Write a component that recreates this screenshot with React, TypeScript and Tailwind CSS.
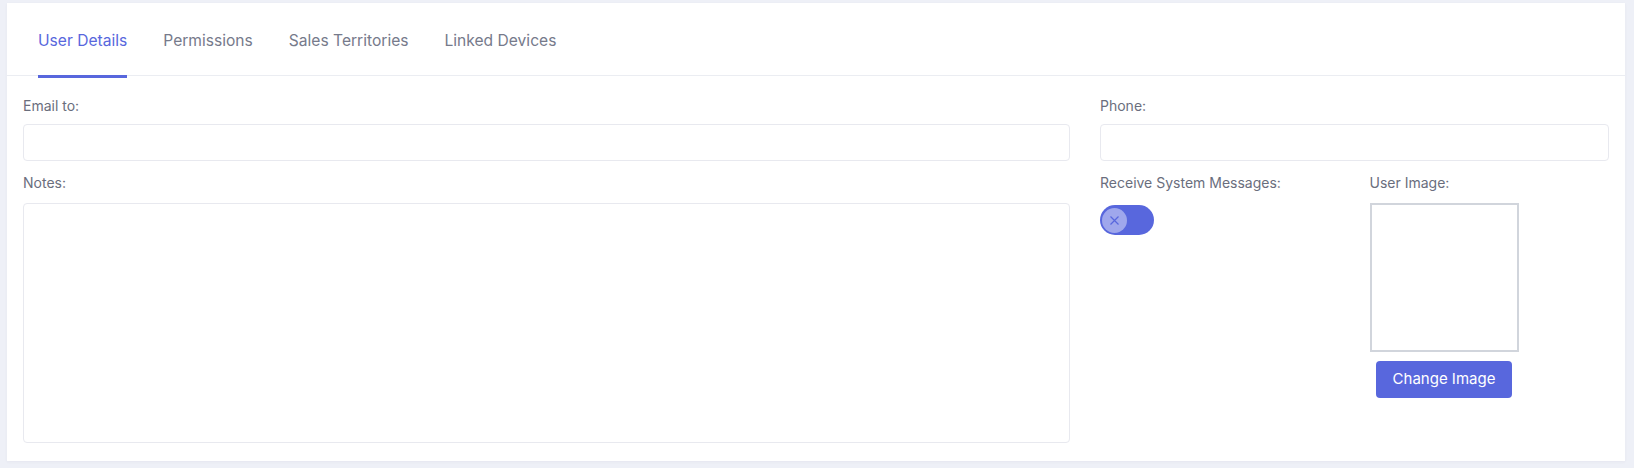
import React from 'react';

const tabs = ['User Details', 'Permissions', 'Sales Territories', 'Linked Devices'];

function Field({ label, children }: { label: string; children: React.ReactNode }) {
  return (
    <div className="flex flex-col">
      <label className="text-[14px] leading-[22px] text-[#6a6e7d] mb-[7px]">{label}</label>
      {children}
    </div>
  );
}

function Toggle() {
  return (
    <button type="button" className="relative w-[54px] h-[30px] rounded-full bg-[#5867dd]">
      <span className="absolute left-[2px] top-[2.5px] w-[25px] h-[25px] rounded-full bg-[#9fa7ec] flex items-center justify-center">
        <svg width="11" height="11" viewBox="0 0 11 11" fill="none" stroke="#5867dd" strokeWidth="1.2">
          <path d="M1.5 1.5l8 8M9.5 1.5l-8 8" />
        </svg>
      </span>
    </button>
  );
}

export default function App() {
  return (
    <div className="w-[1634px] h-[468px] bg-[#eef0f7] pl-[7px] pr-[9px] pt-[3px] pb-[7px]" style={{ fontFamily: 'Inter, "Noto Sans", sans-serif' }}>
      <div className="h-[458px] bg-white shadow-[0_1px_3px_rgba(82,63,105,0.05)]">
        <div className="h-[73px] border-b border-[#ebedf2] pl-[31px] flex gap-[36px]">
          {tabs.map((t, i) => (
            <div key={t} className="relative h-full pt-[25px]">
              <span className={`text-[15.6px] leading-[24px] ${i === 0 ? 'text-[#5867dd]' : 'text-[#767a8b]'}`}>{t}</span>
              {i === 0 && <span className="absolute left-0 right-0 -bottom-[3px] h-[3px] bg-[#5867dd]" />}
            </div>
          ))}
        </div>

        <div className="px-[16px] pt-[19px] flex gap-[30px]">
          <div className="w-[1047px] flex flex-col gap-[11px]">
            <Field label="Email to:">
              <input className="h-[37px] rounded-[4px] border border-[#e8e9ef] outline-none px-3" />
            </Field>
            <Field label="Notes:">
              <textarea className="h-[240px] rounded-[4px] border border-[#e8e9ef] outline-none resize-none p-3 mt-[2px]" />
            </Field>
          </div>

          <div className="w-[509px] flex flex-col gap-[11px]">
            <Field label="Phone:">
              <input className="h-[37px] rounded-[4px] border border-[#e8e9ef] outline-none px-3" />
            </Field>
            <div className="grid grid-cols-2 gap-[30px]">
              <div className="flex flex-col">
                <span className="text-[14px] leading-[22px] text-[#6a6e7d] mb-[11px]">Receive System Messages:</span>
                <Toggle />
              </div>
              <div className="flex flex-col">
                <span className="text-[14px] leading-[22px] text-[#6a6e7d] mb-[9px]">User Image:</span>
                <div className="w-[149px] h-[149px] border-2 border-[#d1d5dc] bg-white" />
                <div className="w-[149px] flex justify-center mt-[9px]">
                  <button type="button" className="w-[136px] h-[37px] rounded-[4px] bg-[#5867dd] text-white text-[15px]">Change Image</button>
                </div>
              </div>
            </div>
          </div>
        </div>
      </div>
    </div>
  );
}
